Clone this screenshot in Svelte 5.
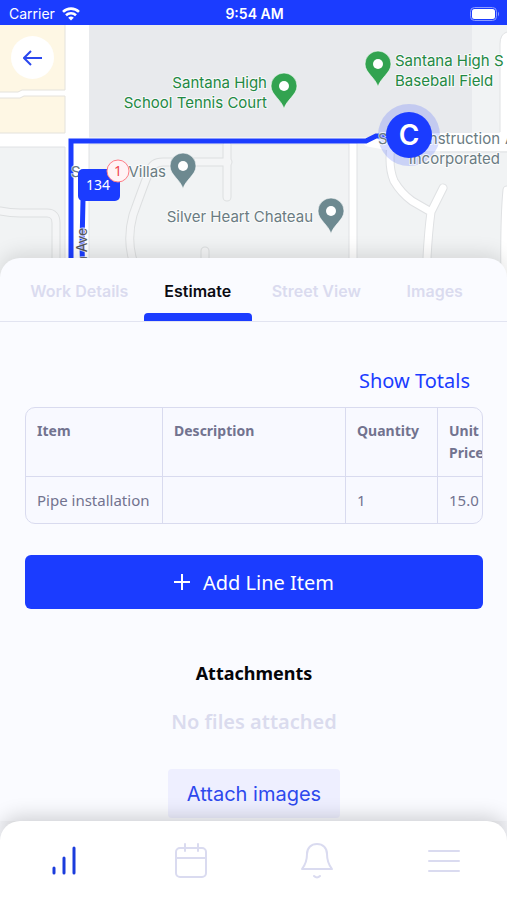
<script>
    let tabs = ['Work Details', 'Estimate', 'Street View', 'Images'];
    let activeTab = $state('Estimate');

    let items = [
        { name: 'Pipe installation', description: '', quantity: '1', price: '15.0' }
    ];

    let pins = [
        { x: 284, y: 91, color: '#32a350' },
        { x: 378, y: 69, color: '#32a350' },
        { x: 183, y: 171, color: '#6d8990' },
        { x: 331, y: 216, color: '#6d8990' }
    ];

    let lanes = 'M0 211q10 2 20 2h27q9 0 9 10v62M142 285q-4-10-10-28-5-20 1-42 10-28 16-43 3-10 14-10h65M227 145v52M205 285v-34';
    let roads = 'M353 144v141M391 145q-3 22 3 36 7 12 18 20l19 11 12-24M431 212q-4 30-5 73M507 190q-3 30-2 95';
</script>

<div class="app">
    <header class="status">
        <div class="carrier">
            <span>Carrier</span>
            <svg width="18" height="14" viewBox="0 0 18 14" fill="none" stroke="#fff" stroke-width="2.6">
                <path d="M1 4.9a11.5 11.5 0 0 1 16 0" />
                <path d="M4 8.3a7.3 7.3 0 0 1 10 0" />
                <path d="M9 13.6 6.2 10.8a4 4 0 0 1 5.6 0z" fill="#fff" stroke="none" />
            </svg>
        </div>
        <b>9:54 AM</b>
        <div class="battery">
            <svg width="30" height="14" viewBox="0 0 30 14">
                <rect x="0.5" y="0.5" width="26" height="13" rx="4" fill="none" stroke="#8d9dff" />
                <rect x="2" y="2" width="23" height="10" rx="2.5" fill="#fff" />
                <path d="M28 4.5q2 2.5 0 5z" fill="#8d9dff" />
            </svg>
        </div>
    </header>

    <section class="map">
        <svg class="canvas" viewBox="0 25 507 260" preserveAspectRatio="xMinYMin slice">
            <rect y="25" width="507" height="260" fill="#f1f3f4" />
            <path d="M89 25h383v112H89z" fill="#e8eaed" />
            <path d="M0 25h89v260H65V147H0z" fill="#fff" />
            <path d="M-2 23h67v67H22l-4 2H-2z" fill="#fef7e4" stroke="#e4e2dc" />
            <path d="M-2 98h22l4-2h41v37H-2z" fill="#fef7e4" stroke="#e4e2dc" />
            <path d="M89 138h300v6H89zM388 133h112V44q0-10 7-12v119H388z" fill="#fff" />
            <path d="M0 147h65v138M89 144v141M89 144h262M440 152h67M500 132V44q0-10 7-12" fill="none" stroke="#e0e2e4" />

            <g fill="none" stroke-linecap="round" stroke-linejoin="round">
                <path d={lanes} stroke="#dddfe0" stroke-width="9" />
                <path d={lanes} stroke="#f4f5f6" stroke-width="7" />
                <path d={roads} stroke="#dfe1e3" stroke-width="9" />
                <path d={roads} stroke="#fff" stroke-width="7" />
                <path d="M368 142l22 4" stroke="#fff" stroke-width="9" />
            </g>

            <path d="M71 285V141h295l10-5h30" fill="none" stroke="#1b3cff" stroke-width="5" />
            <path d="M83 285l-1-40 1-45" fill="none" stroke="#1b3cff" stroke-width="5" />

            {#each pins as pin}
                <g transform="translate({pin.x} {pin.y})">
                    <path d="M0 18C-2 9-13 4-13-5a13 13 0 0 1 26 0C13 4 2 9 0 18z" fill={pin.color} stroke="#fff" stroke-opacity="0.6" />
                    <circle cy="-5" r="5" fill="#fff" />
                </g>
            {/each}

            <circle cx="409" cy="135" r="31" fill="#1b3cff" fill-opacity="0.18" />
            <g class="place green">
                <text x="267" y="88" text-anchor="end">Santana High</text>
                <text x="267" y="108" text-anchor="end">School Tennis Court</text>
                <text x="395" y="66">Santana High S</text>
                <text x="395" y="86">Baseball Field</text>
            </g>
            <g class="place">
                <text x="71" y="177">S</text>
                <text x="166" y="177" text-anchor="end">Villas</text>
                <text x="313" y="222" text-anchor="end">Silver Heart Chateau</text>
                <text x="378" y="144">S</text>
                <text x="500" y="144" text-anchor="end">nstruction</text>
                <text x="505" y="144">A</text>
                <text x="500" y="164" text-anchor="end">Incorporated</text>
                <text class="street" transform="translate(87 264) rotate(-90)">a Ave</text>
            </g>

            <circle cx="409" cy="135" r="23" fill="#1b3cff" />
            <text class="logo" x="409" y="145" text-anchor="middle">C</text>

            <rect x="78" y="169" width="42" height="32" rx="5" fill="#1b3cff" />
            <text class="number" x="98" y="190" text-anchor="middle">134</text>
            <circle cx="118" cy="171" r="11" fill="#fff3f5" stroke="#ff7d86" />
            <text class="count" x="118" y="176" text-anchor="middle">1</text>
        </svg>
        <button class="back" aria-label="Back">
            <svg width="20" height="16" viewBox="0 0 20 16">
                <path d="M19 8H1M8 1 1 8l7 7" />
            </svg>
        </button>
    </section>

    <main>
        <nav class="tabs">
            {#each tabs as tab}
                <button class:active={tab === activeTab} onclick={() => (activeTab = tab)}>{tab}</button>
            {/each}
        </nav>

        <div class="content">
            <button class="totals">Show Totals</button>

            <div class="scroller">
                <table>
                    <thead>
                        <tr>
                            <th class="item">Item</th>
                            <th class="description">Description</th>
                            <th class="quantity">Quantity</th>
                            <th class="price">Unit Price</th>
                        </tr>
                    </thead>
                    <tbody>
                        {#each items as item}
                            <tr>
                                <td>{item.name}</td>
                                <td>{item.description}</td>
                                <td>{item.quantity}</td>
                                <td>{item.price}</td>
                            </tr>
                        {/each}
                    </tbody>
                </table>
            </div>

            <button class="add">
                <svg width="16" height="16" viewBox="0 0 16 16">
                    <path d="M8 0v16M0 8h16" />
                </svg>
                Add Line Item
            </button>

            <h2>Attachments</h2>
            <p>No files attached</p>
            <button class="attach">Attach images</button>
        </div>
    </main>

    <nav class="bottom">
        <button class="current" aria-label="Jobs">
            <svg width="36" height="36" viewBox="0 0 36 36">
                <path d="M9 25v5M19 15v15M29 5v25" />
            </svg>
        </button>
        <button aria-label="Calendar">
            <svg width="36" height="36" viewBox="0 0 36 36">
                <rect x="4" y="5" width="30" height="29" rx="4" />
                <path d="M4 15h30M13 1v7M26 1v7" />
            </svg>
        </button>
        <button aria-label="Notifications">
            <svg width="36" height="36" viewBox="0 0 36 36">
                <path d="M3 26c4-5 5-9 5-15C8 5 12 1 18 1s10 4 10 10c0 6 1 10 5 15zM15 33q3 3 6 0" />
            </svg>
        </button>
        <button aria-label="Menu">
            <svg width="36" height="36" viewBox="0 0 36 36">
                <path d="M3 8h30M3 18h30M3 28h30" />
            </svg>
        </button>
    </nav>
</div>

<style>
    :global(body) {
        margin: 0;
        background: #fafbff;
    }

    .app {
        display: flex;
        flex-direction: column;
        height: 100vh;
        overflow: hidden;
        background: #fafbff;
        font-family: "Noto Sans", sans-serif;
    }

    button {
        padding: 0;
        border: 0;
        background: none;
        font-family: inherit;
        cursor: pointer;
    }

    svg {
        display: block;
    }

    .status {
        display: grid;
        grid-template-columns: 1fr auto 1fr;
        align-items: center;
        flex: none;
        height: 25px;
        padding: 2px 7px 0 9px;
        box-sizing: border-box;
        background: #1b3cff;
        color: #fff;
        font-family: Inter, sans-serif;
        font-size: 14px;
    }

    .status b {
        font-weight: 600;
    }

    .carrier {
        display: flex;
        align-items: center;
        gap: 7px;
    }

    .battery {
        justify-self: end;
    }

    .map {
        position: relative;
        flex: none;
        height: 260px;
        overflow: hidden;
        background: #f1f3f4;
    }

    .canvas {
        width: 100%;
        height: 100%;
        font-family: Inter, sans-serif;
    }

    .place {
        fill: #6a7b82;
        stroke: #fff;
        stroke-opacity: 0.7;
        stroke-width: 2px;
        paint-order: stroke;
        font-size: 15px;
    }

    .green {
        fill: #238943;
    }

    .street {
        fill: #555;
        font-size: 14px;
    }

    .logo {
        fill: #fff;
        font: 600 28px Inter, sans-serif;
    }

    .number {
        fill: #fff;
        font: 14px "Noto Sans", sans-serif;
    }

    .count {
        fill: #f0444f;
        font: 14px "Noto Sans", sans-serif;
    }

    .back {
        position: absolute;
        top: 11px;
        left: 11px;
        display: grid;
        place-items: center;
        width: 43px;
        height: 43px;
        border-radius: 50%;
        background: #fff;
    }

    .back svg {
        fill: none;
        stroke: #2b48ee;
        stroke-width: 2;
    }

    main {
        position: relative;
        flex: 1;
        min-height: 0;
        margin-top: -27px;
        border-radius: 20px 20px 0 0;
        background: #fafbff;
        box-shadow: 0 -4px 20px rgba(0, 0, 0, 0.12);
    }

    .tabs {
        display: flex;
        height: 63px;
        padding: 0 13px 0 20px;
        border-bottom: 1px solid #e2e4f1;
    }

    .tabs button {
        position: relative;
        flex: 1 1 0;
        padding-top: 2px;
        color: #dadbef;
        font-family: Inter, sans-serif;
        font-size: 16px;
        font-weight: 600;
        white-space: nowrap;
    }

    .tabs .active {
        color: #0b0b12;
    }

    .tabs .active::after {
        content: '';
        position: absolute;
        right: 5px;
        bottom: 0;
        left: 5px;
        height: 8px;
        border-radius: 4px 4px 0 0;
        background: #1b3cff;
    }

    .content {
        display: flex;
        flex-direction: column;
        padding: 44px 24px 0 25px;
    }

    .totals {
        align-self: flex-end;
        padding: 0 13px;
        color: #1b3cff;
        font-size: 20px;
        line-height: 30px;
    }

    .scroller {
        margin-top: 11px;
        overflow: hidden;
        border: 1px solid #d9dbef;
        border-radius: 10px;
        background: #f8f9ff;
    }

    table {
        width: 546px;
        table-layout: fixed;
        border-collapse: collapse;
        color: #72738f;
        font-size: 15px;
        line-height: 22px;
    }

    th,
    td {
        padding: 12px 11px;
        border-right: 1px solid #d9dbef;
        text-align: left;
        vertical-align: top;
        white-space: nowrap;
    }

    th {
        border-bottom: 1px solid #d9dbef;
        font-size: 14px;
        font-weight: 700;
    }

    .item {
        width: 114px;
    }

    .description {
        width: 160px;
    }

    .quantity {
        width: 69px;
    }

    .price {
        width: 40px;
        padding-right: 100px;
        white-space: normal;
    }

    .add {
        display: flex;
        align-items: center;
        justify-content: center;
        gap: 13px;
        height: 54px;
        margin-top: 31px;
        border-radius: 6px;
        background: #1b3cff;
        color: #fff;
        font-size: 20px;
    }

    .add svg {
        stroke: #fff;
        stroke-width: 2;
    }

    h2,
    p {
        margin: 0;
        text-align: center;
        line-height: 28px;
    }

    h2 {
        margin-top: 50px;
        color: #050508;
        font-size: 18px;
    }

    p {
        margin-top: 21px;
        color: #dadbee;
        font-size: 20px;
        font-weight: 600;
    }

    .attach {
        align-self: center;
        height: 49px;
        margin-top: 33px;
        padding: 0 19px;
        border-radius: 4px;
        background: #eeefff;
        color: #2d49ed;
        font-family: Inter, sans-serif;
        font-size: 20px;
    }

    .bottom {
        position: relative;
        display: flex;
        flex: none;
        height: 79px;
        border-radius: 20px 20px 0 0;
        background: #fff;
        box-shadow: 0 -4px 20px rgba(0, 0, 0, 0.18);
    }

    .bottom button {
        display: grid;
        flex: 1;
        place-items: center;
        color: #dadbf0;
    }

    .bottom svg {
        fill: none;
        stroke: currentColor;
        stroke-width: 2;
        stroke-linecap: round;
        stroke-linejoin: round;
    }

    .bottom .current {
        color: #1b3cdc;
    }

    .bottom .current svg {
        stroke-width: 3;
    }
</style>
